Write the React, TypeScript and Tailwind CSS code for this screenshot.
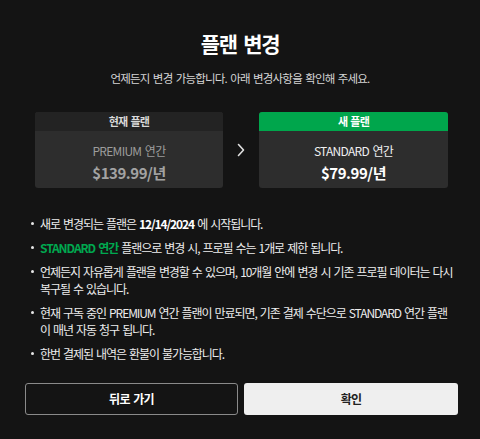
import React from "react";

const Dot = () => (
  <span className="mt-[7px] mr-[6px] h-[3px] w-[3px] shrink-0 rounded-full bg-[#e6e6e6]" />
);

export default function App() {
  return (
    <div
      className="flex h-[439px] w-[480px] flex-col bg-[#141414] text-[#e8e8e8]"
      style={{ fontFamily: "'Noto Sans CJK KR', 'Noto Sans', sans-serif" }}
    >
      <h1 className="pt-[29px] text-center text-[21px] font-bold leading-[28px] tracking-[-0.06em] [word-spacing:3px] text-white">
        플랜 변경
      </h1>
      <p className="mt-[13px] text-center text-[11.5px] leading-[16px] tracking-[-0.07em] [word-spacing:1.5px] text-[#d6d6d6]">
        언제든지 변경 가능합니다. 아래 변경사항을 확인해 주세요.
      </p>

      <div className="ml-[35px] mt-[26px] flex items-center">
        <div className="h-[76px] w-[188px] overflow-hidden rounded-[3px] bg-[#2d2d2d]">
          <div className="flex h-[19px] items-center justify-center bg-[#232323] text-[11px] font-bold tracking-[-0.06em] [word-spacing:1px] text-[#d9d9d9]">
            현재 플랜
          </div>
          <div className="flex flex-col items-center pt-[11px]">
            <div className="text-[12px] leading-[17px] tracking-[-0.06em] [word-spacing:1.5px] text-[#9c9c9c]">PREMIUM 연간</div>
            <div className="mt-[3px] text-[15px] font-bold leading-[21px] tracking-[-0.03em] text-[#a3a3a3]">$139.99/년</div>
          </div>
        </div>
        <div className="flex w-[36px] justify-center">
          <svg width="10" height="14" viewBox="0 0 10 14" fill="none">
            <path d="M2.5 1.5 L7.5 7 L2.5 12.5" stroke="#e0e0e0" strokeWidth="1.6" strokeLinecap="round" strokeLinejoin="round" />
          </svg>
        </div>
        <div className="h-[76px] w-[189px] overflow-hidden rounded-[3px] bg-[#2d2d2d]">
          <div className="flex h-[19px] items-center justify-center bg-[#00a64c] text-[11px] font-bold tracking-[-0.06em] [word-spacing:1px] text-white">
            새 플랜
          </div>
          <div className="flex flex-col items-center pt-[11px]">
            <div className="text-[12px] leading-[17px] tracking-[-0.06em] [word-spacing:1.5px] text-[#f0f0f0]">STANDARD 연간</div>
            <div className="mt-[3px] text-[15px] font-bold leading-[21px] tracking-[-0.03em] text-white">$79.99/년</div>
          </div>
        </div>
      </div>

      <ul className="ml-[31px] mt-[27px] flex flex-col gap-[7px] text-[12px] leading-[17px] tracking-[-0.09em] [word-spacing:1.5px] text-[#ececec]">
        <li className="flex whitespace-nowrap">
          <Dot />
          <span>
            새로 변경되는 플랜은 <b className="font-bold text-white">12/14/2024</b> 에 시작됩니다.
          </span>
        </li>
        <li className="flex whitespace-nowrap">
          <Dot />
          <span>
            <b className="font-bold text-[#00a84f]">STANDARD 연간</b> 플랜으로 변경 시, 프로필 수는 1개로 제한 됩니다.
          </span>
        </li>
        <li className="flex whitespace-nowrap">
          <Dot />
          <span>
            언제든지 자유롭게 플랜을 변경할 수 있으며, 10개월 안에 변경 시 기존 프로필 데이터는 다시
            <br />
            복구될 수 있습니다.
          </span>
        </li>
        <li className="flex whitespace-nowrap">
          <Dot />
          <span>
            현재 구독 중인 PREMIUM 연간 플랜이 만료되면, 기존 결제 수단으로 STANDARD 연간 플랜
            <br />
            이 매년 자동 청구 됩니다.
          </span>
        </li>
        <li className="flex whitespace-nowrap">
          <Dot />
          <span>한번 결제된 내역은 환불이 불가능합니다.</span>
        </li>
      </ul>

      <div className="ml-[25px] mt-[21px] flex gap-[6px]">
        <button className="h-[32px] w-[213px] rounded-[3px] border border-[#8a8a8a] bg-[#141414] text-[12px] font-bold tracking-[-0.06em] [word-spacing:1.5px] text-white">
          뒤로 가기
        </button>
        <button className="h-[32px] w-[214px] rounded-[3px] bg-[#efefef] text-[12px] font-bold tracking-[-0.06em] text-[#222]">
          확인
        </button>
      </div>
    </div>
  );
}
